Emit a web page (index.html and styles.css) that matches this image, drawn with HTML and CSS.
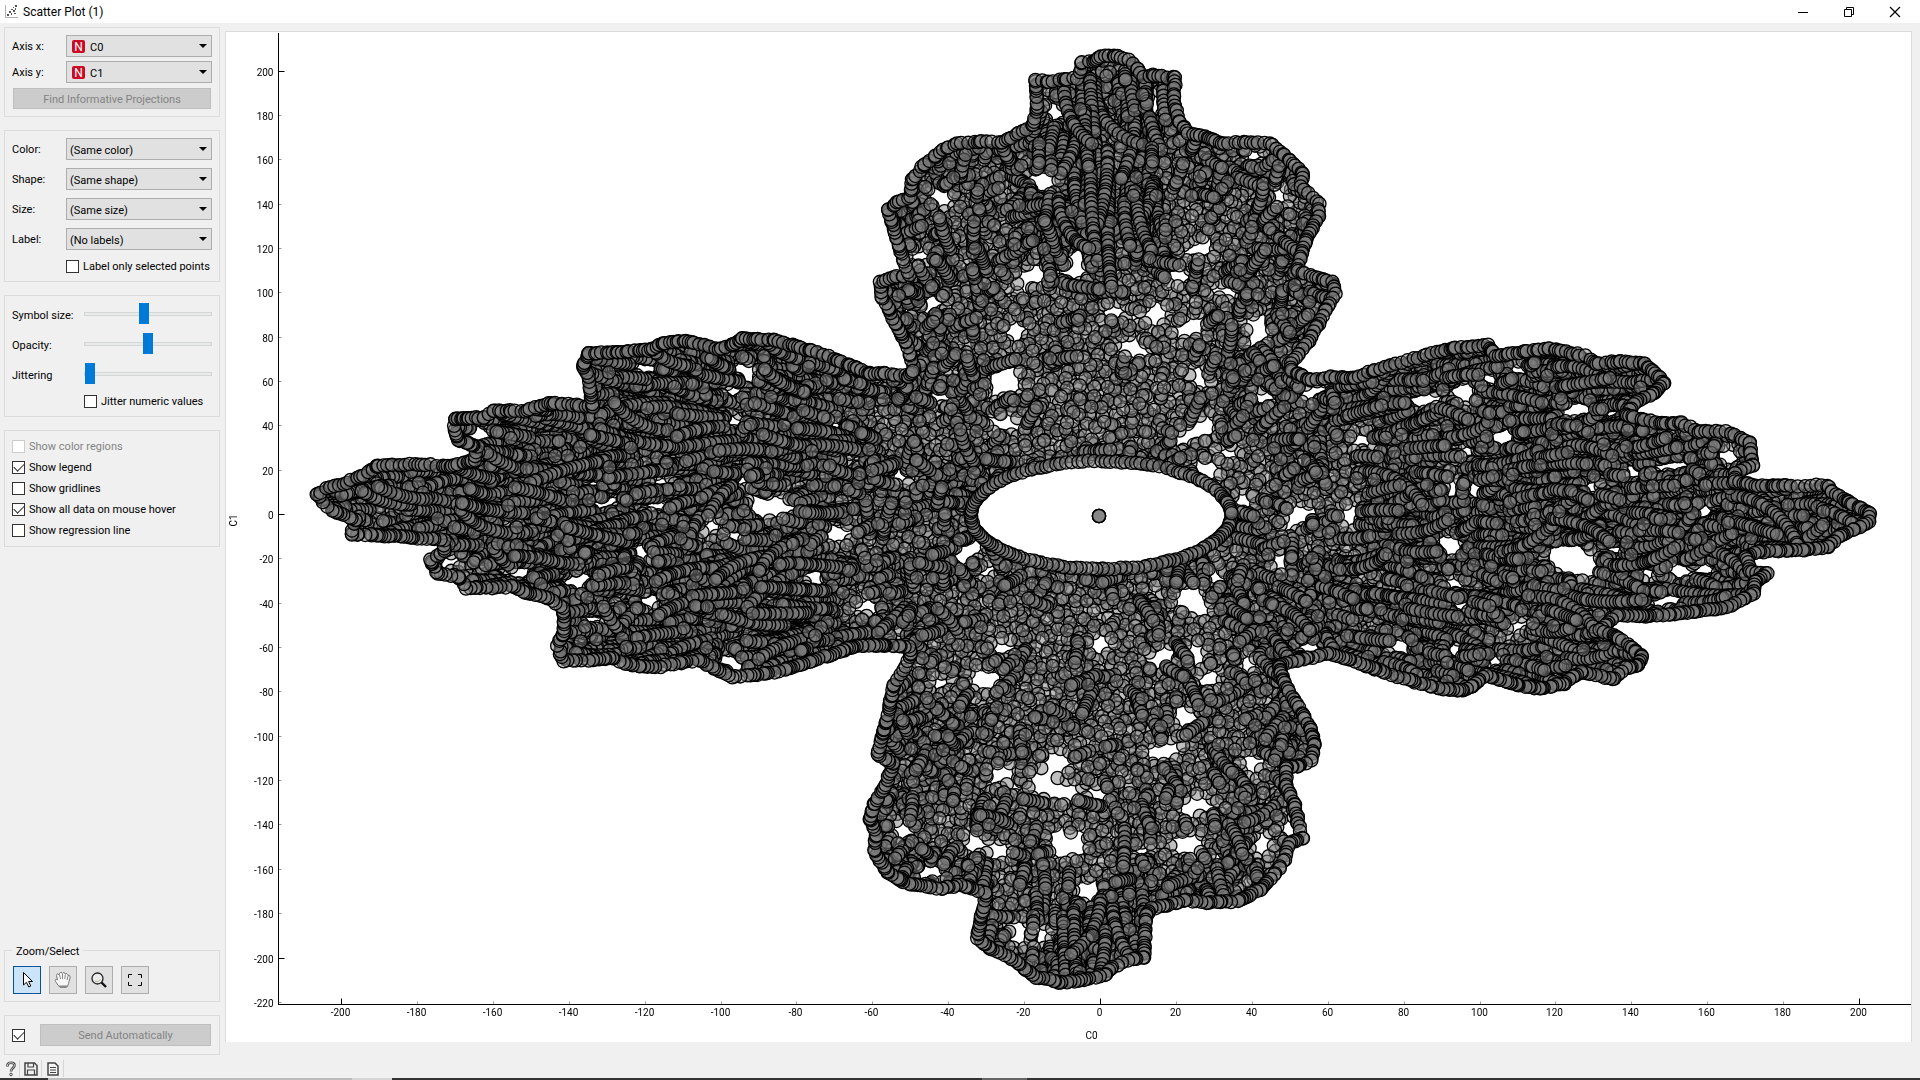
FILE: index.html
```html
<!DOCTYPE html>
<html lang="en">
<head>
<meta charset="utf-8">
<title>Scatter Plot (1)</title>
<link rel="stylesheet" href="styles.css">
</head>
<body>
<div class="window">
  <header class="titlebar">
    <svg class="app-icon" width="14" height="14" viewBox="0 0 14 14" aria-hidden="true"><path d="M1.500 0V12.500H14" fill="none" stroke="#b0b0b0"/><g fill="#555"><rect x="3" y="9" width="2" height="2"/><rect x="5" y="6" width="2" height="2"/><rect x="7" y="8" width="1" height="2"/><rect x="7" y="4" width="2" height="1"/><rect x="9" y="5" width="2" height="2"/><rect x="11" y="3" width="1" height="2"/><rect x="9" y="2" width="1" height="1"/><rect x="11" y="0" width="2" height="2"/><rect x="10" y="8" width="2" height="1"/></g></svg>
    <h1 class="title">Scatter Plot (1)</h1>
    <div class="window-buttons">
      <button type="button" class="window-button" aria-label="Minimize"><svg width="12" height="12" viewBox="0 0 12 12"><path d="M1 6.500H11" stroke="#000"/></svg></button>
      <button type="button" class="window-button" aria-label="Restore"><svg width="12" height="12" viewBox="0 0 12 12"><path d="M1.500 3.500H8.500V10.500H1.500ZM3.500 3V1.500H10.500V8.500H9" fill="none" stroke="#000"/></svg></button>
      <button type="button" class="window-button" aria-label="Close"><svg width="12" height="12" viewBox="0 0 12 12"><path d="M1 1L11 11M11 1L1 11" stroke="#000" stroke-width="1.200"/></svg></button>
    </div>
  </header>
  <div class="body">
    <aside class="sidebar">
      <section class="group axes">
        <div class="field"><label for="axis-x">Axis x:</label><span class="combo"><span class="badge">N</span><select id="axis-x" class="with-badge"><option>C0</option></select></span></div>
        <div class="field"><label for="axis-y">Axis y:</label><span class="combo"><span class="badge">N</span><select id="axis-y" class="with-badge"><option>C1</option></select></span></div>
        <button type="button" class="push" disabled>Find Informative Projections</button>
      </section>
      <section class="group marks">
        <div class="field"><label for="color">Color:</label><span class="combo"><select id="color"><option>(Same color)</option></select></span></div>
        <div class="field"><label for="shape">Shape:</label><span class="combo"><select id="shape"><option>(Same shape)</option></select></span></div>
        <div class="field"><label for="size">Size:</label><span class="combo"><select id="size"><option>(Same size)</option></select></span></div>
        <div class="field"><label for="label">Label:</label><span class="combo"><select id="label"><option>(No labels)</option></select></span></div>
        <label class="check indent-combo"><input type="checkbox">Label only selected points</label>
      </section>
      <section class="group sliders">
        <div class="slide"><label for="symbol-size">Symbol size:</label><input id="symbol-size" type="range" min="0" max="118" value="55"></div>
        <div class="slide"><label for="opacity">Opacity:</label><input id="opacity" type="range" min="0" max="118" value="59"></div>
        <div class="slide"><label for="jittering">Jittering</label><input id="jittering" type="range" min="0" max="118" value="0"></div>
        <label class="check indent-slide"><input type="checkbox">Jitter numeric values</label>
      </section>
      <section class="group options">
        <label class="check off"><input type="checkbox" disabled>Show color regions</label>
        <label class="check"><input type="checkbox" checked>Show legend</label>
        <label class="check"><input type="checkbox">Show gridlines</label>
        <label class="check"><input type="checkbox" checked>Show all data on mouse hover</label>
        <label class="check"><input type="checkbox">Show regression line</label>
      </section>
      <fieldset class="group tools">
        <legend>Zoom/Select</legend>
        <button type="button" class="tool active" aria-label="Select"><svg width="20" height="20" viewBox="0 0 20 20"><path d="M6.500 2.500V15L9.500 12.300L11.800 17L13.800 16L11.600 11.500H15.500Z" fill="#fff" stroke="#000"/></svg></button>
        <button type="button" class="tool" aria-label="Pan"><svg width="20" height="20" viewBox="0 0 20 20"><path d="M6 16.500L2.500 11.500C1.500 9.500 3 8.500 4.500 10L3.500 5.500C3.500 3.500 5.500 3.500 6 5L6.500 3.500C7 2 9 2 9.200 3.500C10 2 12 2.300 12.200 4C13.500 3 15 4 15 5.500C16.500 5 17.500 6 17 8L15.500 13.500L14.500 16.500Z" fill="#f6f6f6" stroke="#777"/><path d="M6.500 5L7.500 9M9.500 4V9M12.300 4.500L11.800 9M15 6L14 10" stroke="#888" fill="none"/><path d="M6 15.500H14.500L13.500 18H7Z" fill="#888"/></svg></button>
        <button type="button" class="tool" aria-label="Zoom"><svg width="20" height="20" viewBox="0 0 20 20"><circle cx="8.500" cy="8.500" r="5.500" fill="#ececec" stroke="#222" stroke-width="1.300"/><path d="M12.500 12.500L17 17" stroke="#111" stroke-width="2.400"/><path d="M6 11Q9 13 11.500 9.500" fill="none" stroke="#b8b090"/></svg></button>
        <button type="button" class="tool" aria-label="Reset zoom"><svg width="20" height="20" viewBox="0 0 20 20"><path d="M3.500 8V4.500H7M13 4.500H16.500V8M16.500 12V15.500H13M7 15.500H3.500V12" fill="none" stroke="#000"/></svg></button>
      </fieldset>
      <section class="group send">
        <input type="checkbox" aria-label="Send automatically" checked>
        <button type="button" class="push" disabled>Send Automatically</button>
      </section>
    </aside>
    <main class="plot">
      <canvas class="points"></canvas>
      <svg class="axes-layer" role="img" aria-label="Scatter plot of C1 against C0"></svg>
    </main>
  </div>
  <footer class="status">
    <button type="button" class="status-button" aria-label="Help"><svg width="12" height="16" viewBox="0 0 12 16"><path d="M2.500 5.500V4C2.500 1 9.500 1 9.500 4.200C9.500 7 6 7 6 10.500" fill="none" stroke="#444" stroke-width="2.600"/><path d="M2.500 5V4C2.500 1 9.500 1 9.500 4.200C9.500 7 6 7 6 10" fill="none" stroke="#eee" stroke-width=".8"/><circle cx="6" cy="13.500" r="1.300" fill="#eee" stroke="#444"/></svg></button>
    <button type="button" class="status-button" aria-label="Save"><svg width="14" height="14" viewBox="0 0 14 14"><path d="M1 1H10.500L13 3.500V13H1Z" fill="#f0f0f0" stroke="#444" stroke-width="1.500"/><path d="M4 1V5H9.500V1M3.500 13V8H10.500V13" fill="none" stroke="#444" stroke-width="1.200"/></svg></button>
    <button type="button" class="status-button" aria-label="Report"><svg width="12" height="14" viewBox="0 0 12 14"><path d="M1 1H8L11 4V13H1Z" fill="#f4f4f4" stroke="#444" stroke-width="1.500"/><path d="M3 5.500H9M3 8H9M3 10.500H9" stroke="#444"/></svg></button>
  </footer>
  <div class="taskbar-edge"></div>
</div>
<script src="plot.js"></script>
</body>
</html>
```
FILE: styles.css
```css
* { box-sizing: border-box; }
html, body { height: 100%; margin: 0; }
body, button, select, input { font-family: Roboto, "Noto Sans", sans-serif; font-size: 11px; color: #000; }
.window { display: flex; flex-direction: column; height: 100%; min-height: 800px; background: #f0f0f0; }
.titlebar { display: flex; align-items: center; height: 23px; padding: 0 2px 0 4px; background: #fff; }
.title { flex: 1; margin: 0 0 0 5px; font-size: 12px; font-weight: 400; line-height: 22px; }
.window-buttons { display: flex; }
.window-button { display: grid; place-items: center; width: 46px; height: 20px; padding: 0; border: 0; background: none; }
.body { display: flex; flex: 1; min-height: 0; }
.sidebar { display: flex; flex-direction: column; width: 225px; padding: 4px 5px 0 4px; }
.group { display: flex; flex-direction: column; margin: 0 0 13px; padding: 7px; border: 1px solid #dcdcdc; }
.axes { gap: 4px; }
.marks { gap: 8px; padding-bottom: 8px; }
.sliders { gap: 9px; padding-bottom: 8px; }
.options { gap: 8px; padding: 9px 7px; }
.field { display: flex; align-items: center; height: 22px; }
.field label { width: 54px; padding-top: 1px; }
.combo { position: relative; flex: 1; }
.combo::after { content: ""; position: absolute; right: 5px; top: 9px; border: 4px solid transparent; border-top-color: #000; border-bottom: 0; pointer-events: none; }
select { display: block; width: 100%; height: 22px; padding: 2px 3px 0; border: 1px solid #adadad; border-radius: 0; background: #e1e1e1; appearance: none; }
.with-badge { padding-left: 23px; }
.badge { position: absolute; left: 6px; top: 5px; width: 13px; height: 13px; border-radius: 2px; background: #cb0a26; color: #fff; font-size: 12px; line-height: 14px; text-align: center; }
.push { height: 21px; margin: 1px 1px 0; padding: 1px 0 0; border: 1px solid #bfbfbf; background: #ccc; color: #838383; }
.check { display: flex; align-items: center; gap: 4px; height: 13px; line-height: 15px; white-space: nowrap; }
.indent-combo { margin: 2px 0 0 54px; }
.indent-slide { margin: 2px 0 0 72px; }
.off { color: #838383; }
input[type="checkbox"] { display: grid; place-items: center; flex: none; width: 13px; height: 13px; margin: 0; border: 1px solid #333; background: #fff; appearance: none; }
input[type="checkbox"]:disabled { border-color: #ccc; }
input[type="checkbox"]:checked::before { content: ""; width: 9px; height: 5px; margin-top: -3px; border: solid #333; border-width: 0 0 1px 1px; transform: rotate(-45deg); }
.slide { display: flex; align-items: center; height: 21px; }
.slide label { width: 72px; padding-top: 3px; }
input[type="range"] { flex: 1; min-width: 0; height: 21px; margin: 0; background: none; appearance: none; }
input[type="range"]::-webkit-slider-runnable-track { height: 4px; border: 1px solid #d6d6d6; background: #e7eaea; }
input[type="range"]::-webkit-slider-thumb { width: 10px; height: 21px; margin-top: -10px; background: #007ad9; border: 0; border-radius: 0; appearance: none; }
.tools { position: relative; flex-direction: row; gap: 8px; margin-top: auto; padding: 15px 8px 7px; }
.tools legend { position: absolute; top: -7px; left: 7px; padding: 0 4px; background: #f0f0f0; line-height: 15px; }
.tool { display: grid; place-items: center; width: 28px; height: 28px; padding: 0; border: 1px solid #adadad; background: #e1e1e1; }
.tool.active { border-color: #005499; background: #cce4f7; }
.send { flex-direction: row; align-items: center; margin-bottom: 4px; padding: 8px 7px; }
.send .push { flex: 1; height: 22px; margin: 0 1px 0 15px; }
.plot { position: relative; flex: 1; min-width: 0; margin: 8px 8px 17px 0; border: solid #dcdcdc; border-width: 1px 1px 0 1px; background: #fff; overflow: hidden; }
.points, .axes-layer { position: absolute; inset: 0; width: 100%; height: 100%; }
.axes-layer text { font-size: 10px; font-family: Roboto, "Noto Sans", sans-serif; }
.status { display: flex; align-items: center; height: 19px; padding-left: 3px; }
.status-button { display: grid; place-items: center; width: 22px; height: 17px; padding: 0; border: 0; border-right: 1px solid #d5d5d5; background: none; }
.status-button:first-child { width: 17px; }
.taskbar-edge { height: 2px; background: linear-gradient(90deg, #333 48px, #bbb 48px, #bbb 352px, #d5d5d5 352px, #d5d5d5 392px, #333 392px, #333 982px, #666 982px, #666 1027px, #333 1027px); }
```
FILE: plot.js
```js
var TOP = [840, 30, 0.34439, 1 / 3], BOTTOM = [840, 640, 0.34439, 1 / 3];
var LEFT = [300, 310, 0.39541, 1 / 3], RIGHT = [1280, 320, 0.39541, 1 / 3], CORE = [920, 380, 1 / 3, 1 / 3];

var OUTLINE = [
  [TOP, [215,1020,190,935,160,880,140,835,120,800,118,757,155,742,200,735,183,687,165,625,150,575,140,540,170,515,205,500,210,450,245,405,300,360,340,340,410,335,470,338,510,315,562,285,572,230,568,150,603,157,650,150,690,145,704,95,735,95,757,80,800,78,837,90,865,115,880,140,915,135,950,143,974,143,970,200,975,240,986,275,1010,310,1060,320,1110,342,1180,337,1250,340,1290,375,1345,430,1340,470,1390,520,1390,560,1362,610,1340,670,1328,722,1390,745,1430,755,1440,790,1410,840,1370,920,1310,1000,1310,1025]],
  [RIGHT, [30,150,75,180,130,172,190,175,240,150,290,132,370,105,440,85,525,75,545,108,600,100,680,85,772,108,800,130,860,125,922,130,960,172,970,190,945,220,900,245,875,285,960,310,1015,310,1060,335,1127,333,1188,370,1190,400,1195,435,1150,460,1150,485,1210,498,1385,497,1395,515,1440,548,1490,580,1490,605,1450,630,1420,645,1385,680,1320,690,1210,695,1178,710,1190,755,1235,762,1200,785,1198,822,1130,862,1045,875,970,885,915,888,850,885,810,930,850,950,890,985,915,1010,905,1035,875,1045,842,1077,760,1055,720,1090,660,1105,600,1095,520,1065,485,1100,460,1112,400,1105,340,1085,260,1055,190,1025,125,1000,65,1015,0,1035]],
  [BOTTOM, [1275,80,1290,130,1320,180,1345,225,1365,265,1378,310,1370,360,1330,380,1295,382,1295,435,1320,495,1330,550,1342,595,1305,610,1290,660,1265,700,1220,750,1155,783,1065,788,1000,780,950,795,905,805,888,828,885,890,883,952,850,957,790,980,770,1005,700,1020,640,1027,570,1012,540,990,500,955,435,925,400,895,405,850,418,800,425,760,350,735,295,745,200,733,140,700,115,660,98,630,105,585,88,535,100,490,125,450,145,400,155,370,110,345,127,268,140,225,150,170,155,135,190,80,205,45]],
  [LEFT, [1540,1010,1450,1005,1400,1010,1290,1055,1200,1088,1095,1102,1047,1075,1010,1050,975,1055,900,1072,825,1062,790,1045,740,1050,668,1053,650,1005,665,975,668,935,665,895,625,862,575,850,540,830,420,835,400,800,350,792,330,747,365,725,365,690,230,677,130,672,140,630,80,600,42,553,75,530,110,522,160,495,195,467,300,463,380,470,442,450,450,410,400,390,390,360,393,327,465,322,490,302,570,303,630,280,740,290,735,240,730,200,716,170,730,130,830,125,880,120,920,100,975,92,1060,118,1103,100,1120,85,1200,92,1290,120,1370,155,1440,190,1480,190,1540,200]]
];

// Gaps in the cloud: x, y, half width, half height, tilt in degrees.
var GAPS = [
  [TOP, [590,455,25,25,0, 625,245,8,25,0, 915,230,7,25,0, 283,498,9,22,-10, 1272,495,7,20,15, 1045,660,28,9,-5, 690,685,15,12,0, 672,728,22,7,0, 555,740,30,8,-15, 980,738,25,8,15, 272,820,20,10,-10, 1120,785,20,7,20, 795,848,25,7,0, 920,850,25,20,0, 1018,893,34,20,-25, 505,905,18,16,0, 1215,900,18,36,10, 855,960,28,12,15, 478,1055,38,30,0, 1047,1053,12,10,0, 230,678,22,8,-15, 1200,378,12,12,0]],
  [BOTTOM, [465,25,16,14,0, 755,12,18,14,0, 940,48,25,12,0, 1033,38,10,16,0, 422,118,26,12,0, 1070,120,25,12,-15, 292,128,14,9,0, 1178,75,10,14,0, 1000,228,16,22,-20, 938,335,45,18,-12, 632,370,30,16,0, 465,405,18,16,-30, 590,430,28,25,0, 650,460,30,12,0, 750,465,20,12,0, 1040,502,50,8,-5, 1195,378,10,14,0, 182,575,16,20,0, 392,608,18,20,0, 475,628,12,14,0, 662,618,45,20,0, 1008,612,26,22,0, 1225,618,16,24,15, 875,635,14,8,0, 723,752,28,22,0, 265,692,25,10,0, 515,870,6,30,5, 580,890,4,22,0, 1305,570,6,25,-10]],
  [LEFT, [1190,592,45,22,0, 1357,675,24,18,0, 862,725,12,20,-35, 700,812,32,12,-12, 872,172,22,7,0, 1125,182,22,14,15, 1100,240,16,6,0, 455,375,24,10,0, 1098,338,16,6,0, 915,518,18,5,0, 740,522,12,5,0, 1120,515,12,6,0, 775,582,22,7,-30, 905,590,16,6,0, 1040,645,16,6,0, 1100,677,16,8,-15, 555,793,20,9,0, 885,873,22,8,0, 1435,888,18,10,-15, 1090,1055,28,12,25, 1295,795,26,6,0, 740,925,24,5,0, 385,752,25,4,0, 1355,345,10,7,0, 1515,498,10,6,0]],
  [RIGHT, [465,213,24,20,0, 750,270,30,15,-15, 562,352,24,19,0, 370,242,36,9,-10, 85,215,36,10,-15, 530,178,16,10,0, 600,150,16,8,0, 205,358,14,8,-20, 840,278,12,6,0, 990,438,55,7,-5, 1135,412,24,12,15, 895,458,14,10,30, 437,508,8,20,0, 490,512,9,22,-15, 50,590,30,14,-35, 180,585,12,22,10, 430,675,26,20,20, 725,715,36,38,0, 765,725,34,26,20, 845,688,14,7,0, 930,755,14,8,0, 1010,752,22,18,0, 1075,748,18,14,0, 980,840,36,10,-8, 440,790,14,10,0, 303,978,20,10,-10, 440,990,12,14,0, 545,1025,14,9,0, 605,915,20,6,0, 455,855,16,4,0, 1075,572,12,9,30, 790,505,10,7,40, 470,390,14,4,0, 75,985,30,6,0]],
  [CORE, [243,132,34,10,22, 830,155,50,14,-22, 858,265,26,14,10, 918,218,12,8,0, 145,515,44,15,-38, 820,668,50,24,38, 70,50,14,6,0, 1035,52,26,8,10, 970,357,10,7,0, 1075,545,9,13,0, 1128,420,18,12,-20, 200,573,20,6,-30, 900,595,18,6,30]]
];
var RING = { x: 1101, y: 515, rx: 130, ry: 54 };

// Sheet rectangle that the plot area shows.
var SHEET = { x: 226, y: 32, w: 1685, h: 1010 };
var RADIUS = 6.6;

var seed = 20187;
function rand() {
  seed = (seed * 1664525 + 1013904223) % 4294967296;
  return seed / 4294967296;
}
function spread() { return rand() + rand() - 1; }

var outline = [];
OUTLINE.forEach(function (part) {
  var f = part[0], p = part[1];
  for (var i = 0; i < p.length; i += 2) outline.push([f[0] + p[i] * f[2], f[1] + p[i + 1] * f[3]]);
});
var gaps = [];
GAPS.forEach(function (part) {
  var f = part[0], g = part[1];
  for (var i = 0; i < g.length; i += 5) {
    var a = g[i + 4] * Math.PI / 180;
    gaps.push([f[0] + g[i] * f[2], f[1] + g[i + 1] * f[3], g[i + 2] * f[2] + RADIUS - 1, g[i + 3] * f[3] + RADIUS - 1, Math.cos(a), Math.sin(a)]);
  }
});

function inside(x, y) {
  var hit = false;
  for (var i = 0, j = outline.length - 1; i < outline.length; j = i++) {
    var a = outline[i], b = outline[j];
    if ((a[1] > y) !== (b[1] > y) && x < (b[0] - a[0]) * (y - a[1]) / (b[1] - a[1]) + a[0]) hit = !hit;
  }
  return hit;
}
function open(x, y) {
  var u = (x - RING.x) / RING.rx, v = (y - RING.y) / RING.ry;
  if (u * u + v * v < 1) return false;
  for (var i = 0; i < gaps.length; i++) {
    var g = gaps[i], dx = x - g[0], dy = y - g[1];
    if (Math.abs(dx) > 40 || Math.abs(dy) > 40) continue;
    var p = (dx * g[4] + dy * g[5]) / g[2], q = (dy * g[4] - dx * g[5]) / g[3];
    if (p * p + q * q < 1) return false;
  }
  return true;
}

var points = [];
function add(list, x, y) { if (inside(x, y) && open(x, y)) list.push([x, y]); }

function build() {
  var x, y, i, k;
  // loose layer, even enough to leave no gaps of its own
  var base = [];
  for (y = 50; y < 1000; y += 7) for (x = 310; x < 1880; x += 7) base.push([x + spread() * 5, y + spread() * 5, rand()]);
  base.sort(function (a, b) { return a[2] - b[2]; });
  base.forEach(function (p) { add(points, p[0], p[1]); });
  // short runs of readings, along the arms
  for (i = 0; i < 6800; i++) {
    x = 310 + rand() * 1570; y = 50 + rand() * 940;
    if (!inside(x, y)) continue;
    var dx = x - 1100, dy = y - 515;
    var middle = Math.abs(dx) < 235;
    var column = Math.abs(dx) < 70 && (y < 230 || y > 880);
    if (middle && !column && rand() > 0.13 + Math.pow(Math.abs(dx) / 235, 1.6) * 0.8) continue;
    var angle = Math.atan2(dy * (middle ? 1 : 0.5), dx) + spread() * (middle ? 0.7 : 0.35);
    if (middle && rand() < 0.35) angle += Math.PI / 2;
    if (column) angle = Math.PI / 2 + spread() * 0.06;
    var turn = spread() * 0.08, n = 3 + Math.floor(rand() * (middle && !column ? 8 : 20));
    for (k = 0; k < n; k++) {
      add(points, x, y);
      var step = 1.5 + rand() * 4.5;
      x += Math.cos(angle) * step; y += Math.sin(angle) * step;
      angle += turn;
    }
    add(points, dx + 1100 + spread() * 25, dy + 515 + spread() * 25);
  }
  // inner ring and outer edge
  for (var t = 0; t < 6.283; t += 0.028 + rand() * 0.03) points.push([RING.x + Math.cos(t) * RING.rx + spread(), RING.y + Math.sin(t) * RING.ry + spread()]);
  for (i = 0; i < outline.length; i++) {
    var a = outline[i], b = outline[(i + 1) % outline.length];
    var len = Math.hypot(b[0] - a[0], b[1] - a[1]);
    for (k = 0; k < len; k += 1 + rand() * 6) points.push([a[0] + (b[0] - a[0]) * k / len + spread(), a[1] + (b[1] - a[1]) * k / len + spread()]);
  }
  points.push([1099, 516], [1099, 516], [1099, 516], [1099, 516]);
}

function draw() {
  var canvas = document.querySelector(".points"), svg = document.querySelector(".axes-layer");
  var w = canvas.clientWidth, h = canvas.clientHeight, sx = w / SHEET.w, sy = h / SHEET.h;
  canvas.width = w; canvas.height = h;
  var c = canvas.getContext("2d");
  c.fillStyle = "rgba(128,128,128,0.5)"; c.strokeStyle = "#000"; c.lineWidth = 1.3;
  points.forEach(function (p) {
    c.beginPath();
    c.arc((p[0] - SHEET.x) * sx, (p[1] - SHEET.y) * sy, RADIUS, 0, 6.2832);
    c.fill(); c.stroke();
  });

  function X(v) { return Math.round((1100.5 + v * 3.795 - SHEET.x) * sx - 0.5) + 0.5; }
  function Y(v) { return Math.round((514.5 - v * 2.2175 - SHEET.y) * sy - 0.5) + 0.5; }
  var left = X(-216.6), bottom = Math.round((1004 - SHEET.y) * sy) + 0.5, out = "", v;
  function line(x1, y1, x2, y2, color) { out += '<path d="M' + x1 + " " + y1 + "L" + x2 + " " + y2 + '" stroke="' + color + '"/>'; }
  function text(x, y, anchor, s) { out += '<text x="' + x + '" y="' + y + '" text-anchor="' + anchor + '">' + s + "</text>"; }
  for (v = -220; v <= 200; v += 20) {
    var major = v % 200 === 0;
    line(left, Y(v), left + (major ? 6 : 3), Y(v), major ? "#000" : "#999");
    text(left - 5, Y(v) + 4, "end", v);
  }
  for (v = -200; v <= 200; v += 20) {
    major = v % 200 === 0;
    line(X(v), bottom, X(v), bottom - (major ? 6 : 3), major ? "#000" : "#999");
    text(X(v) - 1, bottom + 11, "middle", v);
  }
  line(left, 1, left, bottom, "#000");
  line(left - 0.5, bottom, w, bottom, "#000");
  text(X(-2.4), bottom + 34, "middle", "C0");
  out += '<text transform="translate(11 ' + (Y(0) + 6) + ') rotate(-90)" text-anchor="middle">C1</text>';
  svg.innerHTML = out;
}

build();
draw();
window.addEventListener("resize", draw);
```
